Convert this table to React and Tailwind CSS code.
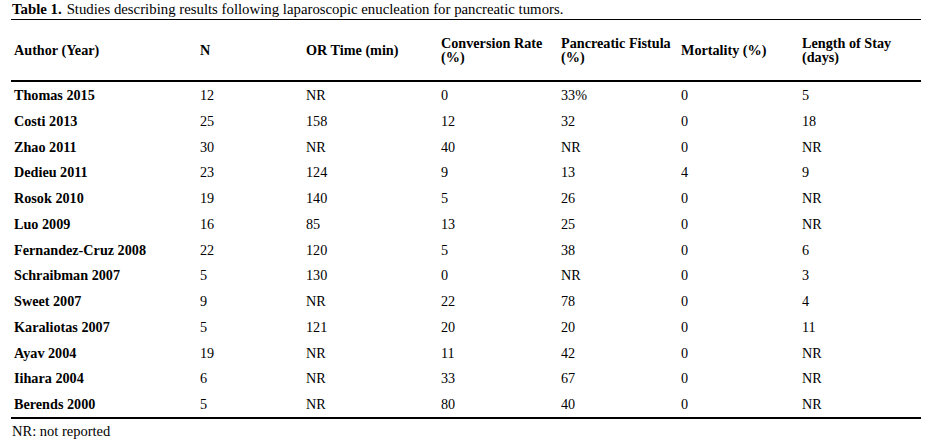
import React from "react";

const rows = [
  ["Thomas 2015", "12", "NR", "0", "33%", "0", "5"],
  ["Costi 2013", "25", "158", "12", "32", "0", "18"],
  ["Zhao 2011", "30", "NR", "40", "NR", "0", "NR"],
  ["Dedieu 2011", "23", "124", "9", "13", "4", "9"],
  ["Rosok 2010", "19", "140", "5", "26", "0", "NR"],
  ["Luo 2009", "16", "85", "13", "25", "0", "NR"],
  ["Fernandez-Cruz 2008", "22", "120", "5", "38", "0", "6"],
  ["Schraibman 2007", "5", "130", "0", "NR", "0", "3"],
  ["Sweet 2007", "9", "NR", "22", "78", "0", "4"],
  ["Karaliotas 2007", "5", "121", "20", "20", "0", "11"],
  ["Ayav 2004", "19", "NR", "11", "42", "0", "NR"],
  ["Iihara 2004", "6", "NR", "33", "67", "0", "NR"],
  ["Berends 2000", "5", "NR", "80", "40", "0", "NR"],
];

const headers = [
  ["Author (Year)"],
  ["N"],
  ["OR Time (min)"],
  ["Conversion Rate", "(%)"],
  ["Pancreatic Fistula", "(%)"],
  ["Mortality (%)"],
  ["Length of Stay", "(days)"],
];

const cols = "grid grid-cols-[186px_106px_135px_120px_120px_121px_122px]";

export default function App() {
  return (
    <div className="w-[938px] h-[439px] bg-white text-black font-['Liberation_Serif',serif] overflow-hidden">
      <div className="h-[19px] pl-[12px] text-[14.8px] leading-[18px] whitespace-nowrap">
        <span className="font-bold">Table 1.</span>
        <span className="ml-[5px]">
          Studies describing results following laparoscopic enucleation for pancreatic tumors.
        </span>
      </div>
      <div className="ml-[11px] w-[910px] border-t border-black">
        <div className={`${cols} h-[62px] items-center border-b-2 border-black font-bold text-[14.2px] leading-[14.5px]`}>
          {headers.map((h, i) => (
            <div key={i} className="pl-[3px] whitespace-nowrap">
              {h.map((l, j) => (
                <div key={j}>{l}</div>
              ))}
            </div>
          ))}
        </div>
        <div className="border-b-2 border-black text-[14.2px]">
          {rows.map((r, i) => (
            <div key={i} className={`${cols} h-[25.75px] items-center pt-[2px]`}>
              {r.map((c, j) => (
                <div key={j} className={`pl-[3px] whitespace-nowrap ${j === 0 ? "font-bold" : ""}`}>
                  {c}
                </div>
              ))}
            </div>
          ))}
        </div>
      </div>
      <div className="pl-[12px] pt-[3px] text-[14.5px] leading-[19px]">NR: not reported</div>
    </div>
  );
}
